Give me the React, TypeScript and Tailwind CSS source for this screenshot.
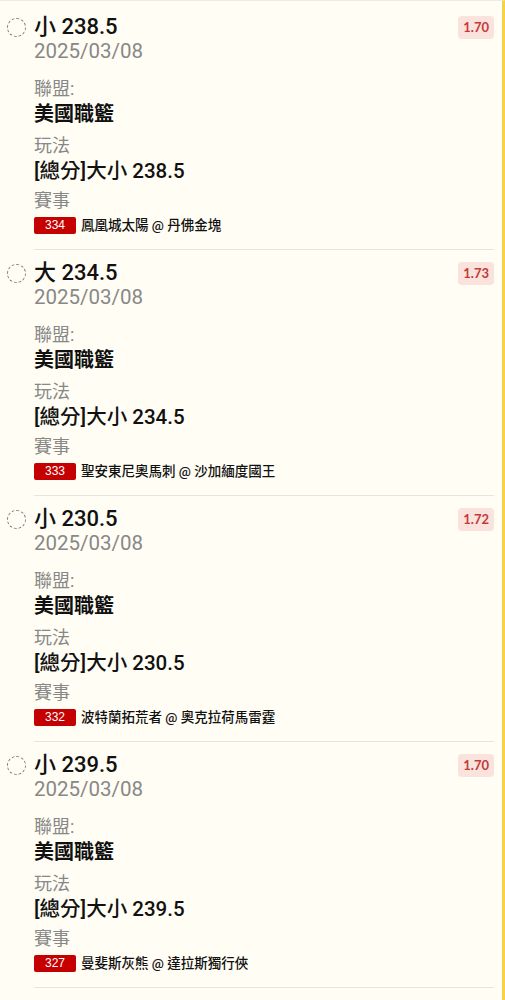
import React from "react"

type Bet = {
  pick: string
  date: string
  league: string
  market: string
  code: string
  match: string
  odds: string
}

const bets: Bet[] = [
  { pick: "小 238.5", date: "2025/03/08", league: "美國職籃", market: "[總分]大小 238.5", code: "334", match: "鳳凰城太陽 @ 丹佛金塊", odds: "1.70" },
  { pick: "大 234.5", date: "2025/03/08", league: "美國職籃", market: "[總分]大小 234.5", code: "333", match: "聖安東尼奧馬刺 @ 沙加緬度國王", odds: "1.73" },
  { pick: "小 230.5", date: "2025/03/08", league: "美國職籃", market: "[總分]大小 230.5", code: "332", match: "波特蘭拓荒者 @ 奧克拉荷馬雷霆", odds: "1.72" },
  { pick: "小 239.5", date: "2025/03/08", league: "美國職籃", market: "[總分]大小 239.5", code: "327", match: "曼斐斯灰熊 @ 達拉斯獨行俠", odds: "1.70" },
]

function BetCard({ bet }: { bet: Bet }) {
  return (
    <div className="flex pl-[7px] pr-[8px] pt-[12px]">
      <div className="w-[27px] shrink-0 pt-[2px]">
        <div className="w-[19px] h-[19px] rounded-full border border-dashed border-[#777]" />
      </div>
      <div className="flex-1 border-b border-[#e6e4dc] pb-[15px]">
        <div className="flex items-start justify-between">
          <div className="text-[22px] leading-[22px] font-medium text-[#111]">{bet.pick}</div>
          <div
            className="rounded-[4px] bg-[#fae3dc] px-[5px] py-[3px] text-[13px] leading-[17px] font-bold text-[#c23b3b]"
            style={{ fontFamily: "Lato, sans-serif" }}
          >
            {bet.odds}
          </div>
        </div>
        <div className="text-[20.5px] leading-[24px] text-[#888]">{bet.date}</div>
        <div className="mt-[14px] text-[18px] leading-[24px] text-[#888]">聯盟:</div>
        <div className="text-[20px] leading-[26px] font-bold text-[#111]">{bet.league}</div>
        <div className="mt-[7px] text-[18px] leading-[24px] text-[#888]">玩法</div>
        <div className="text-[20.5px] leading-[26px] font-medium text-[#111]">{bet.market}</div>
        <div className="mt-[5px] text-[18px] leading-[24px] text-[#888]">賽事</div>
        <div className="mt-[4px] flex items-center gap-[5px]">
          <span
            className="w-[42px] h-[17px] rounded-[2px] bg-[#c40000] text-center text-[12px] leading-[17px] text-white"
            style={{ fontFamily: "'Liberation Sans', sans-serif" }}
          >
            {bet.code}
          </span>
          <span className="text-[13.5px] leading-[17px] font-medium text-[#111]">{bet.match}</span>
        </div>
      </div>
    </div>
  )
}

export default function App() {
  return (
    <div
      className="min-h-screen w-[505px] pt-[3px] bg-[#fffdf4] border-t border-[#ecebe6] border-r-[3px] border-r-[#f6d24a]"
      style={{ fontFamily: "Roboto, 'Noto Sans CJK TC', sans-serif" }}
    >
      {bets.map((b, i) => (
        <BetCard key={i} bet={b} />
      ))}
    </div>
  )
}
